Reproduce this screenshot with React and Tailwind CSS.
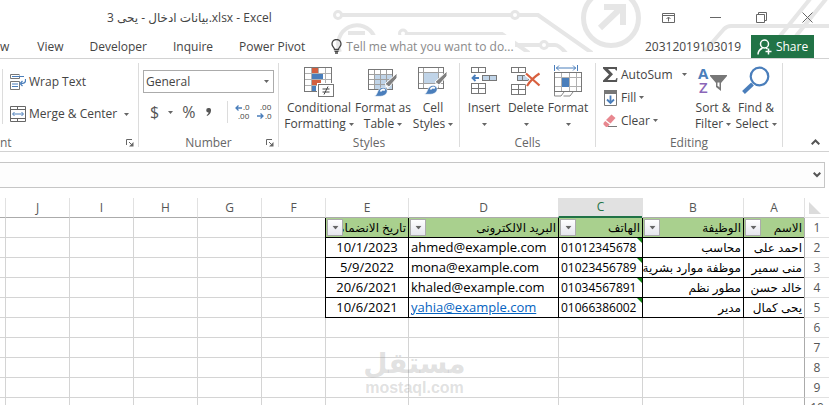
import { useState } from 'react'

const COLUMNS = [
  { id: 'A', width: 'w-[61px]', title: 'الاسم' },
  { id: 'B', width: 'w-[101px]', title: 'الوظيفة' },
  { id: 'C', width: 'w-[84px]', title: 'الهاتف' },
  { id: 'D', width: 'w-[150px]', title: 'البريد الالكترونى' },
  { id: 'E', width: 'w-[83px]', title: 'تاريخ الانضمام' },
]

const EMPTY_COLUMNS = ['F', 'G', 'H', 'I', 'J']

const PEOPLE = [
  { name: 'احمد على', job: 'محاسب', phone: '01012345678', email: 'ahmed@example.com', date: '10/1/2023' },
  { name: 'منى سمير', job: 'موظفة موارد بشرية', phone: '01023456789', email: 'mona@example.com', date: '5/9/2022' },
  { name: 'خالد حسن', job: 'مطور نظم', phone: '01034567891', email: 'khaled@example.com', date: '20/6/2021' },
  { name: 'يحى كمال', job: 'مدير', phone: '01066386002', email: 'yahia@example.com', date: '10/6/2021', link: true },
]

const EMPTY_ROWS = [6, 7, 8, 9, 10]

function Caret({ className = '' }) {
  return (
    <svg viewBox="0 0 5 3" className={`inline-block h-[3px] w-[5px] shrink-0 ${className}`} aria-hidden="true">
      <path d="M0 0h5L2.5 3z" fill="#666" />
    </svg>
  )
}

function HeaderArt() {
  return (
    <svg className="absolute right-0 top-0 h-[52px] w-[497px]" viewBox="332 0 497 52" fill="none" stroke="#e6e6e6" strokeWidth="4" aria-hidden="true">
      <circle cx="338" cy="15" r="3.5" strokeWidth="3" />
      <path d="M342 15h169M519 15h19l54 38" />
      <circle cx="515" cy="15" r="3.5" strokeWidth="3" />
      <path d="M340 52a18 18 0 1 1 34-16" />
      <path d="M348 33h17" />
      <circle cx="403" cy="33.5" r="3.5" strokeWidth="3" />
      <path d="M407 34h95l27 19M509 45h31M548 45h7q4 0 11 8" />
      <circle cx="544" cy="45" r="3.5" strokeWidth="3" />
      <circle cx="611" cy="18" r="27.5" strokeWidth="5" />
      <path d="M600 28l22-21M604 7h19v18" strokeWidth="6" />
      <path d="M829 26H731q-4 0-7 3l-21 24" />
      <path d="M780 36l30-37M796 36l30-37" />
      <path d="M348 35h167v18H348z" fill="#fff" stroke="none" />
    </svg>
  )
}

function TitleBar() {
  return (
    <div className="relative flex h-[35px] items-center justify-between pl-[107px] pr-4">
      <span className="whitespace-nowrap text-[12px] text-[#444]" dir="ltr">
        <bdo dir="ltr">3 <bdi>يحى</bdi> - <bdi>بيانات ادخال</bdi>.xlsx - Excel</bdo>
      </span>
      <div className="flex items-center gap-[35px] text-[#666]">
        <button type="button" aria-label="Ribbon display options">
          <svg width="13" height="10" viewBox="0 0 13 10" fill="none" stroke="currentColor" className="block">
            <path d="M.5.5h12v9H.5zM.5 2.500h12M6.500 8.500v-4M4.500 6l2-2 2 2" />
          </svg>
        </button>
        <button type="button" aria-label="Minimize">
          <svg width="11" height="11" viewBox="0 0 11 11" stroke="currentColor" className="block">
            <path d="M0 5.500h11" />
          </svg>
        </button>
        <button type="button" aria-label="Restore">
          <svg width="11" height="11" viewBox="0 0 11 11" fill="none" stroke="currentColor" className="block">
            <path d="M.5 2.500h8v8h-8zM2.500 2.500v-2h8v8h-2" />
          </svg>
        </button>
        <button type="button" aria-label="Close">
          <svg width="11" height="11" viewBox="0 0 11 11" stroke="currentColor" className="block">
            <path d="M.5.5l10 10M10.500.5l-10 10" />
          </svg>
        </button>
      </div>
    </div>
  )
}

function TabBar() {
  return (
    <nav className="relative flex h-[23px] items-center whitespace-nowrap text-[12px] text-[#444]">
      <div className="flex items-center gap-[26px]">
        <button type="button" className="pr-[2px]">w</button>
        <button type="button">View</button>
        <button type="button">Developer</button>
        <button type="button">Inquire</button>
        <button type="button">Power Pivot</button>
        <button type="button" className="flex items-center gap-1 text-[#8a8a8a]">
          <svg width="11" height="15" viewBox="0 0 11 15" fill="none" stroke="#444" strokeWidth="1.3" aria-hidden="true">
            <path d="M3.500 10.500c0-2.200-2.500-2.800-2.500-5.500a4.500 4.500 0 0 1 9 0c0 2.700-2.500 3.300-2.500 5.500z" />
            <path d="M3.500 12.300h4M4 14h3" />
          </svg>
          Tell me what you want to do...
        </button>
      </div>
      <div className="ml-auto flex h-full items-center gap-[10px] pr-[15px]">
        <span>20312019103019</span>
        <button type="button" className="flex h-full w-[63px] items-center justify-center gap-1 bg-[#217346] text-white">
          <svg width="15" height="16" viewBox="0 0 15 16" fill="none" stroke="currentColor" strokeWidth="1.5" aria-hidden="true">
            <circle cx="7.5" cy="5" r="4" />
            <path d="M1 15.500c0-3.500 1.500-5 4.500-6.500M9 9l1.500 1M11.500 9.500v6M8.500 12.500h6" />
          </svg>
          Share
        </button>
      </div>
    </nav>
  )
}

function Launcher({ label }) {
  return (
    <button type="button" aria-label={label} className="absolute right-1 top-1">
      <svg width="8" height="8" viewBox="0 0 8 8" fill="none" stroke="#666" className="block">
        <path d="M.5 6V.5H6M3 3l3 3" />
        <path d="M7.500 3v4.500H3z" fill="#666" stroke="none" />
      </svg>
    </button>
  )
}

function Group({ label, width, launcher, children }) {
  return (
    <>
      <section className={`flex shrink-0 flex-col ${width}`}>
        <div className="flex h-[76px]">{children}</div>
        <div className="relative h-4 text-center text-[#666]">
          {label}
          {launcher && <Launcher label={launcher} />}
        </div>
      </section>
      <div className="my-1 w-px shrink-0 bg-[#dcdcdc]" />
    </>
  )
}

function BigButton({ icon, top, bottom, width }) {
  return (
    <button type="button" className={`flex shrink-0 flex-col items-center pt-[6px] ${width}`}>
      <span className="flex h-[35px] items-start justify-center">{icon}</span>
      <span>{top}</span>
      <span className="flex h-4 items-center gap-[3px]">{bottom}<Caret /></span>
    </button>
  )
}

function ConditionalIcon() {
  return (
    <svg width="31" height="32" viewBox="0 -2 31 32" fill="none" aria-hidden="true">
      <g shapeRendering="crispEdges">
        <path d="M.5.5h27v24H.5z" fill="#fff" stroke="#777" />
        <path d="M7.500 1v23M14.500 1v23M21.500 1v23M1 6.500h26M1 12.500h26M1 18.500h26" stroke="#b0b0b0" />
        <path d="M8 1h6v5H8zM8 13h9v5H8z" fill="#d35f3f" />
        <path d="M8 7h11v5H8zM8 19h4v5H8z" fill="#4a7ebb" />
        <path d="M13 16h17v14H13z" fill="#fff" />
        <path d="M14.500 17.500h15v12h-15z" fill="#fff" stroke="#777" />
      </g>
      <path d="M18.500 22h7M18.500 25h7M24 19.500l-4 8" stroke="#444" />
    </svg>
  )
}

function Brush() {
  return (
    <>
      <path d="M29 4v5l-8 9-4-3z" fill="#808080" stroke="#fff" strokeWidth="1" />
      <path d="M17.500 16.500l3 3" stroke="#fff" strokeWidth="1.5" />
      <path d="M6 27c3-.5 3-3.500 4.500-6 2-3 6-3.500 8-1 2 3-.5 6-4 7-3 .6-6 .3-8.500 0z" fill="#4a7ebb" stroke="#fff" strokeWidth=".6" />
      <path d="M12.500 22.500c1-2.200 3-2.500 4.300-1.200" stroke="#fff" strokeWidth="1.8" />
    </>
  )
}

function TableIcon() {
  return (
    <svg width="30" height="32" viewBox="0 -4 30 32" fill="none" aria-hidden="true">
      <g shapeRendering="crispEdges">
        <path d="M.5.5h24v20H.5z" fill="#fff" stroke="#777" />
        <path d="M7 6h17v14H7z" fill="#c0d4e8" />
        <path d="M6.500 1v19M12.500 1v19M18.500 1v19M1 5.500h23M1 10.500h23M1 15.500h23" stroke="#a0a0a0" />
      </g>
      <Brush />
    </svg>
  )
}

function CellStylesIcon() {
  return (
    <svg width="30" height="32" viewBox="0 -2 30 32" fill="none" aria-hidden="true">
      <g shapeRendering="crispEdges">
        <path d="M.5.5h25v21H.5z" fill="#fff" stroke="#777" />
        <path d="M6 6h14v10H6z" fill="#c0d4e8" />
        <path d="M5.500 1v20M20.500 1v20M1 5.500h24M1 16.500h24" stroke="#a0a0a0" />
      </g>
      <Brush />
    </svg>
  )
}

function InsertIcon() {
  return (
    <svg width="26" height="32" viewBox="0 -2 26 32" fill="none" aria-hidden="true">
      <g stroke="#777" shapeRendering="crispEdges">
        <path d="M.5.5h14v5H.5zM7.500.5v5M.5 16.500h14v10H.5zM7.500 16.500v10M.5 21.500h14" />
        <path d="M11.500 8.500h14v5h-14zM18.500 8.500v5" fill="#c0d4e8" />
      </g>
      <path d="M8 11H2M4.500 8L1.500 11l3 3" stroke="#4a7ebb" strokeWidth="1.8" />
    </svg>
  )
}

function DeleteIcon() {
  return (
    <svg width="30" height="32" viewBox="0 -2 30 32" fill="none" aria-hidden="true">
      <g stroke="#777" shapeRendering="crispEdges">
        <path d="M.5.5h14v5H.5zM7.500.5v5M.5 17.500h14v10H.5zM7.500 17.500v10M.5 22.500h14" />
        <path d="M6.500 8.500h11v5h-11zM11.500 8.500v5" fill="#c0d4e8" />
      </g>
      <path d="M15 7l13 12M28.500 6.500C23 10 19 14 16 19" stroke="#fff" strokeWidth="4" />
      <path d="M15 6.500l13.500 12M28.500 6.500C23 10 19 14 16 19" stroke="#d8603f" strokeWidth="2.2" />
    </svg>
  )
}

function FormatIcon() {
  return (
    <svg width="29" height="32" viewBox="0 0 29 32" fill="none" aria-hidden="true">
      <path d="M.5 0v6M23.500 0v6M2 3h20M5 .5L2.500 3 5 5.500M19 .5L21.500 3 19 5.500" stroke="#4a7ebb" />
      <g shapeRendering="crispEdges">
        <path d="M.5 7.500h27v19H.5z" stroke="#777" />
        <path d="M7.500 8v18M15.500 8v18M22.500 8v18M1 12.500h26M1 21.500h26" stroke="#b0b0b0" />
        <path d="M8 13h7v9H8z" fill="#4a7ebb" />
      </g>
      <path d="M.5 27v4H7l3-4M9.500 31H16l3-4" stroke="#888" />
    </svg>
  )
}

function SortIcon() {
  return (
    <svg width="30" height="32" viewBox="0 0 30 32" className="overflow-visible" aria-hidden="true">
      <text x="0" y="14" fontSize="15" fontWeight="700" fill="#4a7ebb">A</text>
      <text x="1" y="28" fontSize="15" fontWeight="600" fill="#8b66b8">Z</text>
      <path d="M12 10h17v1l-6 7v8l-5-4v-4l-6-7z" fill="#777" />
      <path d="M19.500 17.500v3l2 2v-5z" fill="#fff" />
    </svg>
  )
}

function FindIcon() {
  return (
    <svg width="28" height="32" viewBox="0 0 28 32" fill="none" stroke="#4a7ebb" aria-hidden="true">
      <circle cx="17.5" cy="11.5" r="8.8" strokeWidth="2.2" />
      <path d="M10.500 19L1.500 27.500" strokeWidth="4" />
    </svg>
  )
}

function AlignmentGroup() {
  return (
    <Group width="w-[138px]" label={<span className="absolute left-0 top-0">nt</span>} launcher="Alignment settings">
      <div className="ml-[2px] mt-[10px] h-[55px] w-px bg-[#dcdcdc]" />
      <div className="ml-[7px] mt-[7px] flex flex-col">
        <button type="button" className="flex h-8 items-center gap-[3px]">
          <svg width="16" height="16" viewBox="0 0 16 16" fill="none" aria-hidden="true">
            <path d="M9.500 1.500v3h-9v-4h9M.5 7.500h9v8h-9z" stroke="#777" />
            <path d="M2 2.500h12M2 10h6M2 12.500h6M15.500 5v1.500q0 3-4.500 3M12.500 7L10 9.500l2.500 2.500" stroke="#4a7ebb" strokeWidth="1.2" />
          </svg>
          Wrap Text
        </button>
        <button type="button" className="flex h-8 items-center gap-[3px]">
          <svg width="16" height="16" viewBox="0 0 16 16" fill="none" aria-hidden="true">
            <path d="M.5.5h15v15H.5zM.5 3.500h15M.5 12.500h15M7.500.5v3M7.500 12.500v3" stroke="#666" />
            <path d="M3 8h10M4.500 6l-2 2 2 2M11.500 6l2 2-2 2" stroke="#4a7ebb" />
          </svg>
          Merge &amp; Center
          <Caret className="ml-1" />
        </button>
      </div>
    </Group>
  )
}

function NumberGroup() {
  return (
    <Group width="w-[139px]" label="Number" launcher="Number settings">
      <div className="mx-1 mt-[11px] flex flex-1 flex-col">
        <div className="relative">
          <select aria-label="Number format" defaultValue="General"
            className="block h-[23px] w-full appearance-none border border-[#ababab] bg-white px-[2px] text-[12px] text-[#444]">
            <option>General</option>
            <option>Number</option>
            <option>Currency</option>
          </select>
          <Caret className="pointer-events-none absolute right-[5px] top-[10px]" />
        </div>
        <div className="mt-2 flex h-[22px] items-center text-[16px] text-[#555]">
          <button type="button" className="ml-[7px]" aria-label="Accounting format">$</button>
          <Caret className="ml-[9px]" />
          <button type="button" className="ml-[9px]" aria-label="Percent style">%</button>
          <button type="button" className="ml-[11px]" aria-label="Comma style">
            <svg width="5" height="8" viewBox="0 0 5 8" className="block">
              <path d="M2.500 0A2.300 2.300 0 0 1 5 2.500C5 5 3.500 7 1 8L.7 7C2 6.300 2.600 5.500 2.500 4.600A2.300 2.300 0 1 1 2.500 0z" fill="#555" />
            </svg>
          </button>
          <div className="ml-auto h-full w-px bg-[#dcdcdc]" />
          <button type="button" className="ml-[7px]" aria-label="Increase decimal">
            <svg width="15" height="16" viewBox="0 0 15 16" className="block overflow-visible" fill="none">
              <path d="M1 4h6M3.500 1.500L1 4l2.500 2.500" stroke="#4a7ebb" strokeWidth="1.3" />
              <text x="8" y="6" fontSize="8" fill="#444">.0</text>
              <text x="3" y="15" fontSize="8" fill="#444">.00</text>
            </svg>
          </button>
          <button type="button" className="ml-[7px] mr-[2px]" aria-label="Decrease decimal">
            <svg width="15" height="16" viewBox="0 0 15 16" className="block overflow-visible" fill="none">
              <path d="M0 12h6M3.500 9.500L6 12l-2.500 2.500" stroke="#4a7ebb" strokeWidth="1.3" />
              <text x="3" y="6" fontSize="8" fill="#444">.00</text>
              <text x="8" y="15" fontSize="8" fill="#444">.0</text>
            </svg>
          </button>
        </div>
      </div>
    </Group>
  )
}

function EditingGroup() {
  return (
    <Group width="w-[186px]" label="Editing">
      <div className="ml-[7px] mr-2 mt-1 flex w-[84px] shrink-0 flex-col">
        <button type="button" className="flex h-[23px] items-center gap-[3px]">
          <svg width="15" height="15" viewBox="0 0 15 15" aria-hidden="true">
            <path d="M0 0h14v3.500h-1L12 2H5l5 5.200L4.500 13H12.500l1-2h1l-.5 4H0v-1.500L6 7.500 0 1.500z" fill="#555" />
          </svg>
          AutoSum
          <Caret className="ml-auto" />
        </button>
        <button type="button" className="flex h-[23px] items-center gap-[3px]">
          <svg width="15" height="16" viewBox="0 0 15 16" fill="none" aria-hidden="true">
            <path d="M1.500.5h12v15h-12z" stroke="#777" />
            <path d="M1 0h13v4H1z" fill="#777" />
            <path d="M7.500 5.500v7M4 9.500l3.500 3.500L11 9.500" stroke="#4a7ebb" strokeWidth="1.8" />
          </svg>
          Fill
          <Caret />
        </button>
        <button type="button" className="flex h-[23px] items-center gap-[3px]">
          <svg width="15" height="14" viewBox="0 0 15 14" aria-hidden="true">
            <path d="M8.500.5l4 3.500-5 5.500L3 6z" fill="#e8878f" />
            <path d="M2.200 7l4.500 3.500L4.500 13H3L.5 10.500V9z" fill="#e8878f" />
            <path d="M5 12.500h9" stroke="#777" />
          </svg>
          Clear
          <Caret />
        </button>
      </div>
      <BigButton width="w-9" icon={<SortIcon />} top="Sort &amp;" bottom="Filter" />
      <BigButton width="w-[50px]" icon={<FindIcon />} top="Find &amp;" bottom="Select" />
    </Group>
  )
}

function Ribbon() {
  return (
    <div className="flex h-[94px] whitespace-nowrap border-y border-[#d2d2d2] text-[12px] leading-4 text-[#444]">
      <AlignmentGroup />
      <NumberGroup />
      <Group width="w-[180px]" label="Styles">
        <div className="flex pl-[5px]">
          <BigButton width="w-[70px]" icon={<ConditionalIcon />} top="Conditional" bottom="Formatting" />
          <BigButton width="w-[58px]" icon={<TableIcon />} top="Format as" bottom="Table" />
          <BigButton width="w-[42px]" icon={<CellStylesIcon />} top="Cell" bottom="Styles" />
        </div>
      </Group>
      <Group width="w-[135px]" label="Cells">
        <div className="flex pl-[3px]">
          <BigButton width="w-[42px]" icon={<InsertIcon />} top="Insert" />
          <BigButton width="w-[42px]" icon={<DeleteIcon />} top="Delete" />
          <BigButton width="w-[42px]" icon={<FormatIcon />} top="Format" />
        </div>
      </Group>
      <EditingGroup />
      <button type="button" aria-label="Collapse the ribbon" className="ml-auto mr-[9px] self-end pb-[6px]">
        <svg width="9" height="6" viewBox="0 0 9 6" fill="none" stroke="#555" strokeWidth="2" className="block">
          <path d="M.7 5.300L4.500 1.500l3.800 3.800" />
        </svg>
      </button>
    </div>
  )
}

function FormulaBar() {
  const [formula, setFormula] = useState('')

  return (
    <div className="relative my-[10px] mr-1">
      <input
        aria-label="Formula"
        value={formula}
        onChange={e => setFormula(e.target.value)}
        className="block h-[26px] w-full border border-l-0 border-[#c6c6c6] bg-[#fdfdfd] pl-2 pr-6 text-[12px] outline-none"
      />
      <button type="button" aria-label="Expand formula bar" className="absolute right-1 top-[10px]">
        <svg width="8" height="6" viewBox="0 0 8 6" fill="none" stroke="#555" strokeWidth="2" className="block">
          <path d="M.7.7L4 4l3.300-3.300" />
        </svg>
      </button>
    </div>
  )
}

const cell = 'h-5 border-b border-l border-black p-0 px-[2px] overflow-hidden'
const emptyCell = 'h-5 border-b border-l border-[#d4d4d4] p-0 last:border-l-0'
const letterCell = 'h-5 border-b border-l border-b-[#ababab] border-l-[#e1e1e1] p-0 text-[12px] font-normal last:border-l-0'

function RowNumber({ n }) {
  return (
    <th scope="row" className="h-5 border-b border-l border-b-[#e1e1e1] border-l-[#ababab] p-0 text-center text-[12px] font-normal text-[#555]">
      {n}
    </th>
  )
}

function EmptyCells() {
  return [...EMPTY_COLUMNS, 'K'].map(id => <td key={id} className={emptyCell} />)
}

function PhoneCell({ value }) {
  return (
    <td className={`${cell} relative text-left text-[12px]`} dir="ltr">
      {value}
      <svg width="5" height="5" viewBox="0 0 5 5" className="absolute right-0 top-0" aria-hidden="true">
        <path d="M0 0h5v5z" fill="#128012" />
      </svg>
    </td>
  )
}

function Sheet() {
  return (
    <div className="relative min-h-0 flex-1 overflow-hidden">
      <table dir="rtl" className="w-full table-fixed border-separate border-spacing-0 whitespace-nowrap text-[12px] leading-[19px] text-black">
        <colgroup>
          <col className="w-[25px]" />
          {COLUMNS.map(c => <col key={c.id} className={c.width} />)}
          {EMPTY_COLUMNS.map(id => <col key={id} className="w-16" />)}
          <col />
        </colgroup>
        <thead>
          <tr>
            <th aria-label="Select all" className="h-5 border-b border-l border-b-[#e1e1e1] border-l-[#e1e1e1] p-0">
              <svg width="12" height="12" viewBox="0 0 12 12" className="mr-2 block">
                <path d="M0 0v12h12z" fill="#dcdcdc" />
              </svg>
            </th>
            {COLUMNS.map(c => (
              <th key={c.id} scope="col"
                className={c.id === 'C'
                  ? 'h-5 border-b-2 border-l border-b-[#217346] border-l-[#e1e1e1] bg-[#e1e1e1] p-0 text-[12px] leading-[18px] font-normal text-[#217346]'
                  : `${letterCell} text-[#555]`}>
                {c.id}
              </th>
            ))}
            {EMPTY_COLUMNS.map(id => <th key={id} scope="col" className={`${letterCell} text-[#555]`}>{id}</th>)}
            <th className={letterCell} />
          </tr>
        </thead>
        <tbody>
          <tr>
            <RowNumber n={1} />
            {COLUMNS.map(c => (
              <td key={c.id} className={`${cell} relative bg-[#a9d08e] text-right`}>
                {c.title}
                <button type="button" aria-label={`Filter ${c.id}`}
                  className="absolute left-px top-px flex h-[17px] w-4 items-center justify-center border border-[#ababab] bg-linear-to-b from-white to-[#e6e6ee]">
                  <Caret className="scale-125" />
                </button>
              </td>
            ))}
            <EmptyCells />
          </tr>
          {PEOPLE.map((p, i) => (
            <tr key={p.phone}>
              <RowNumber n={i + 2} />
              <td className={`${cell} text-right`}>{p.name}</td>
              <td className={`${cell} text-right`}>{p.job}</td>
              <PhoneCell value={p.phone} />
              <td className={`${cell} text-left text-[13px]`} dir="ltr">
                {p.link ? <a href={`mailto:${p.email}`} className="text-[#0563c1] underline">{p.email}</a> : p.email}
              </td>
              <td className={`${cell} text-center text-[13px]`} dir="ltr">{p.date}</td>
              <EmptyCells />
            </tr>
          ))}
          {EMPTY_ROWS.map(n => (
            <tr key={n}>
              <RowNumber n={n} />
              {COLUMNS.map(c => <td key={c.id} className={emptyCell} />)}
              <EmptyCells />
            </tr>
          ))}
        </tbody>
      </table>
      <div className="pointer-events-none absolute inset-x-0 bottom-2 flex flex-col items-center font-bold text-[#999]/30">
        <span className="text-[28px] leading-[30px] font-['DejaVu_Sans',sans-serif]">مستقل</span>
        <span className="text-[16px] leading-[18px] font-['Liberation_Sans',sans-serif]">mostaql.com</span>
      </div>
    </div>
  )
}

export default function App() {
  return (
    <div className="flex h-screen flex-col overflow-hidden bg-white font-['Open_Sans','Noto_Sans','DejaVu_Sans',sans-serif]">
      <header className="relative">
        <HeaderArt />
        <TitleBar />
        <TabBar />
      </header>
      <Ribbon />
      <FormulaBar />
      <Sheet />
    </div>
  )
}
